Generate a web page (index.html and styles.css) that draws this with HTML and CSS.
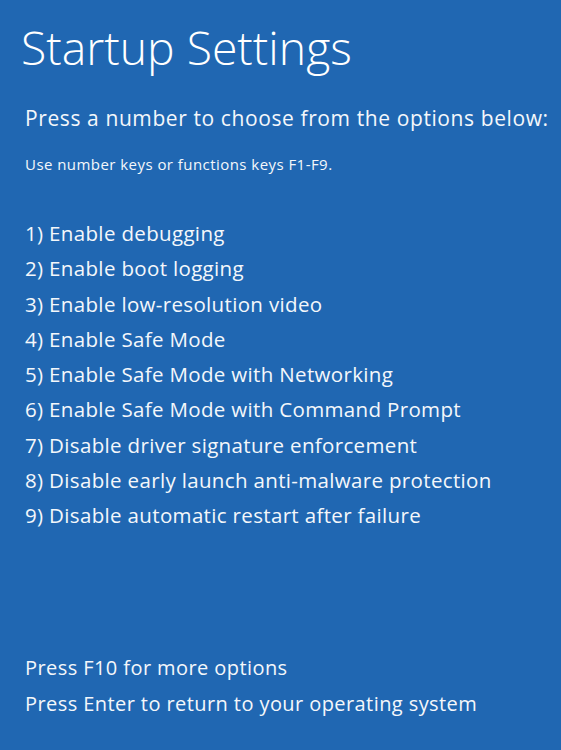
FILE: index.html
```html
<!DOCTYPE html>
<html>
<head>
<meta charset="utf-8">
<link rel="stylesheet" href="styles.css">
</head>
<body>
<main class="screen">
  <h1 class="title">Startup Settings</h1>
  <p class="lead">Press a number to choose from the options below:</p>
  <p class="hint">Use number keys or functions keys F1-F9.</p>
  <ol class="options">
    <li>1) Enable debugging</li>
    <li>2) Enable boot logging</li>
    <li>3) Enable low-resolution video</li>
    <li>4) Enable Safe Mode</li>
    <li>5) Enable Safe Mode with Networking</li>
    <li>6) Enable Safe Mode with Command Prompt</li>
    <li>7) Disable driver signature enforcement</li>
    <li>8) Disable early launch anti-malware protection</li>
    <li>9) Disable automatic restart after failure</li>
  </ol>
  <div class="footer">
    <p>Press F10 for more options</p>
    <p>Press Enter to return to your operating system</p>
  </div>
</main>
</body>
</html>
```

FILE: styles.css
```css
html, body {
  margin: 0;
  padding: 0;
  height: 100%;
}
body {
  background: #2067b2;
  color: #f4f7fb;
  font-family: "Open Sans", "Noto Sans", sans-serif;
}
.screen {
  height: 750px;
  box-sizing: border-box;
  padding: 20px 0 0 25px;
  display: flex;
  flex-direction: column;
}
.title {
  margin: 0 0 0 -4px;
  font-size: 46.3px;
  font-weight: 300;
  line-height: 56px;
  color: #ffffff;
}
.lead {
  margin: 28px 0 0;
  font-size: 21px;
  letter-spacing: 0.6px;
  line-height: 28px;
}
.hint {
  margin: 22px 0 0;
  font-size: 15px;
  letter-spacing: 0.45px;
  line-height: 20px;
}
.options {
  list-style: none;
  margin: 42px 0 0;
  padding: 0;
  font-size: 20.5px;
  letter-spacing: 0.34px;
  line-height: 35.3px;
}
.footer {
  margin-top: auto;
  padding-bottom: 28px;
  font-size: 20px;
  letter-spacing: 0.42px;
  line-height: 36px;
}
.footer p {
  margin: 0;
}
```
